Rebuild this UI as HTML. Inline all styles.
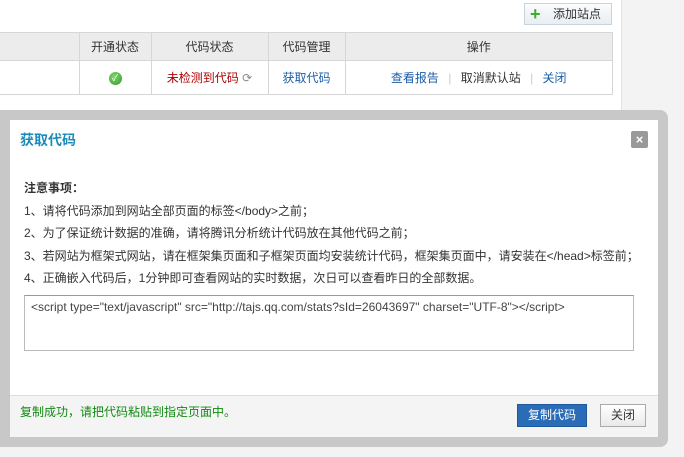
<!DOCTYPE html>
<html><head><meta charset="utf-8"><style>
*{margin:0;padding:0;box-sizing:border-box}
body{width:684px;height:457px;overflow:hidden;background:#fff;font:12px "Liberation Sans","Noto Sans CJK SC",sans-serif;color:#333;position:relative}
.abs{position:absolute}
.strip{left:621px;top:0;width:63px;height:457px;background:#f3f3f3;border-left:1px solid #e2e2e2}
.bot{left:0;top:447px;width:684px;height:10px;background:#f3f3f3}
.btnadd{left:524px;top:3px;width:88px;height:22px;border:1px solid #c9d3dc;background:linear-gradient(#fafcfd,#e8eef3);font-size:12px;line-height:20px;color:#333}
table{position:absolute;left:-1px;top:32px;border-collapse:collapse;width:614px}
td{border:1px solid #d6d6d6;text-align:center;white-space:nowrap}
tr.h td{background:#ececec;height:28px;color:#333}
tr.r td{height:34px;background:#fff}
a{color:#1b5ea8;text-decoration:none}
.frame{left:0;top:110px;width:668px;height:337px;background:#c8c8c8;border-radius:0 8px 8px 0}
.inner{left:10px;top:120px;width:648px;height:317px;background:#fff}
.title{left:20px;top:130px;font-size:14px;font-weight:bold;color:#1d8bb8}
.x{left:631px;top:131px;width:17px;height:17px;background:#999;color:#fff;font-weight:bold;font-size:13px;line-height:17px;text-align:center;border-radius:2px}
.txt{left:24px;top:177px;line-height:22.5px;white-space:nowrap;color:#333}
.ta{left:24px;top:295px;width:610px;height:56px;border:1px solid #bbb;border-top-color:#999;padding:4px 6px;color:#444;white-space:nowrap;font-size:12px}
.foot{left:10px;top:395px;width:648px;height:42px;background:#f4f4f4;border-top:1px solid #ddd}
.ok{left:20px;top:403px;color:#118a11;line-height:18px}
.b1{left:517px;top:404px;width:70px;height:23px;background:#2b6cb7;border:1px solid #1d5aa0;color:#fff;text-align:center;line-height:21px}
.b2{left:600px;top:404px;width:46px;height:23px;background:linear-gradient(#fff,#e9e9e9);border:1px solid #aaa;text-align:center;line-height:21px}
</style></head><body>
<div class="abs strip"></div>
<div class="abs bot"></div>
<div class="abs btnadd"><span style="position:absolute;left:5px;top:2px;color:#3fae2a;font-size:18px;font-weight:bold;line-height:16px">+</span><span style="position:absolute;left:28px">添加站点</span></div>
<table>
<tr class="h"><td style="width:80px;border-left:none"></td><td style="width:72px">开通状态</td><td style="width:117px">代码状态</td><td style="width:77px">代码管理</td><td>操作</td></tr>
<tr class="r"><td style="border-left:none"></td><td><span style="display:inline-block;width:13px;height:13px;border-radius:50%;background:radial-gradient(circle at 40% 35%,#7fd66b,#2e9a24);color:#fff;font-size:9px;line-height:13px;vertical-align:middle">✓</span></td><td style="color:#a00">未检测到代码 <span style="color:#888">⟳</span></td><td><a>获取代码</a></td><td><a>查看报告</a> <span style="color:#ccc;margin:0 6px">|</span> 取消默认站 <span style="color:#ccc;margin:0 6px">|</span> <a>关闭</a></td></tr>
</table>
<div class="abs frame"></div>
<div class="abs inner"></div>
<div class="abs title">获取代码</div>
<div class="abs x">×</div>
<div class="abs txt"><b>注意事项：</b><br>1、请将代码添加到网站全部页面的标签&lt;/body&gt;之前；<br>2、为了保证统计数据的准确，请将腾讯分析统计代码放在其他代码之前；<br>3、若网站为框架式网站，请在框架集页面和子框架页面均安装统计代码，框架集页面中，请安装在&lt;/head&gt;标签前；<br>4、正确嵌入代码后，1分钟即可查看网站的实时数据，次日可以查看昨日的全部数据。</div>
<div class="abs ta">&lt;script type="text/javascript" src="http://tajs.qq.com/stats?sId=26043697" charset="UTF-8"&gt;&lt;/script&gt;</div>
<div class="abs foot"></div>
<div class="abs ok">复制成功，请把代码粘贴到指定页面中。</div>
<div class="abs b1">复制代码</div>
<div class="abs b2">关闭</div>
</body></html>
